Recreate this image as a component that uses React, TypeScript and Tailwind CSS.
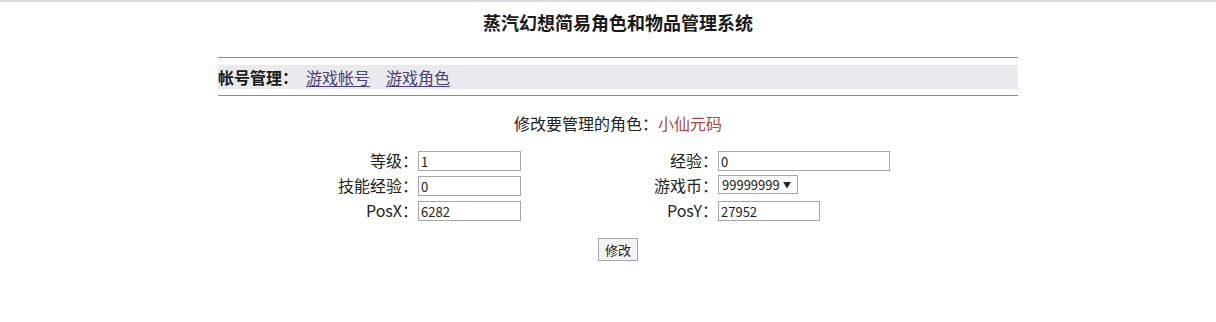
const font = { fontFamily: '"Noto Sans CJK SC", "Liberation Sans", sans-serif' };

const inputCls =
  'h-[20px] border border-[#a6a6a6] bg-white px-[2px] text-[13px] leading-[18px] text-[#222] outline-none';

function Label({ children }: { children: React.ReactNode }) {
  return <div className="text-right text-[16px] leading-[20px] text-[#222]">{children}</div>;
}

export default function App() {
  return (
    <div className="min-h-[322px] w-full bg-white border-t-2 border-[#dcdcdc]" style={font}>
      <div className="pl-[20px]">
        <h1 className="mt-[8px] text-center text-[18px] font-bold leading-[24px] text-[#1a1a1a]">
          蒸汽幻想简易角色和物品管理系统
        </h1>

        <div className="mx-auto mt-[23px] w-[800px]">
          <div className="border-t border-[#8c8c8c]" />
          <div className="mt-[7px] flex h-[24px] items-center bg-[#e9e9ee] text-[16px] leading-[24px]">
            <span className="font-bold text-[#1a1a1a]">帐号管理：</span>
            <a href="#" className="ml-[8px] text-[#4b4373] underline underline-offset-2">
              游戏帐号
            </a>
            <a href="#" className="ml-[16px] text-[#4b4373] underline underline-offset-2">
              游戏角色
            </a>
          </div>
          <div className="mt-[6px] border-t border-[#8c8c8c]" />
        </div>

        <p className="mt-[15px] text-center text-[16px] leading-[24px] text-[#222]">
          修改要管理的角色：<span className="text-[#a5484a]">小仙元码</span>
        </p>

        <div className="mx-auto mt-[12px] grid w-[560px] grid-cols-[80px_232px_68px_180px] auto-rows-[25px] items-center">
          <Label>等级：</Label>
          <div>
            <input className={`${inputCls} w-[103px]`} defaultValue="1" />
          </div>
          <Label>经验：</Label>
          <div>
            <input className={`${inputCls} w-[172px]`} defaultValue="0" />
          </div>

          <Label>技能经验：</Label>
          <div>
            <input className={`${inputCls} w-[103px]`} defaultValue="0" />
          </div>
          <Label>游戏币：</Label>
          <div>
            <div className="flex h-[19px] w-[80px] items-center justify-between border border-[#a6a6a6] bg-white pl-[3px] pr-[6px] text-[13px] text-[#222]">
              <span>99999999</span>
              <span className="text-[8px]">▼</span>
            </div>
          </div>

          <Label>PosX：</Label>
          <div>
            <input className={`${inputCls} w-[103px]`} defaultValue="6282" />
          </div>
          <Label>PosY：</Label>
          <div>
            <input className={`${inputCls} w-[102px]`} defaultValue="27952" />
          </div>
        </div>

        <div className="mt-[16px] flex justify-center">
          <button className="h-[23px] w-[40px] border border-[#a6a6a6] bg-[#f3f3f3] text-[13px] leading-[20px] text-[#222]">
            修改
          </button>
        </div>
      </div>
    </div>
  );
}
